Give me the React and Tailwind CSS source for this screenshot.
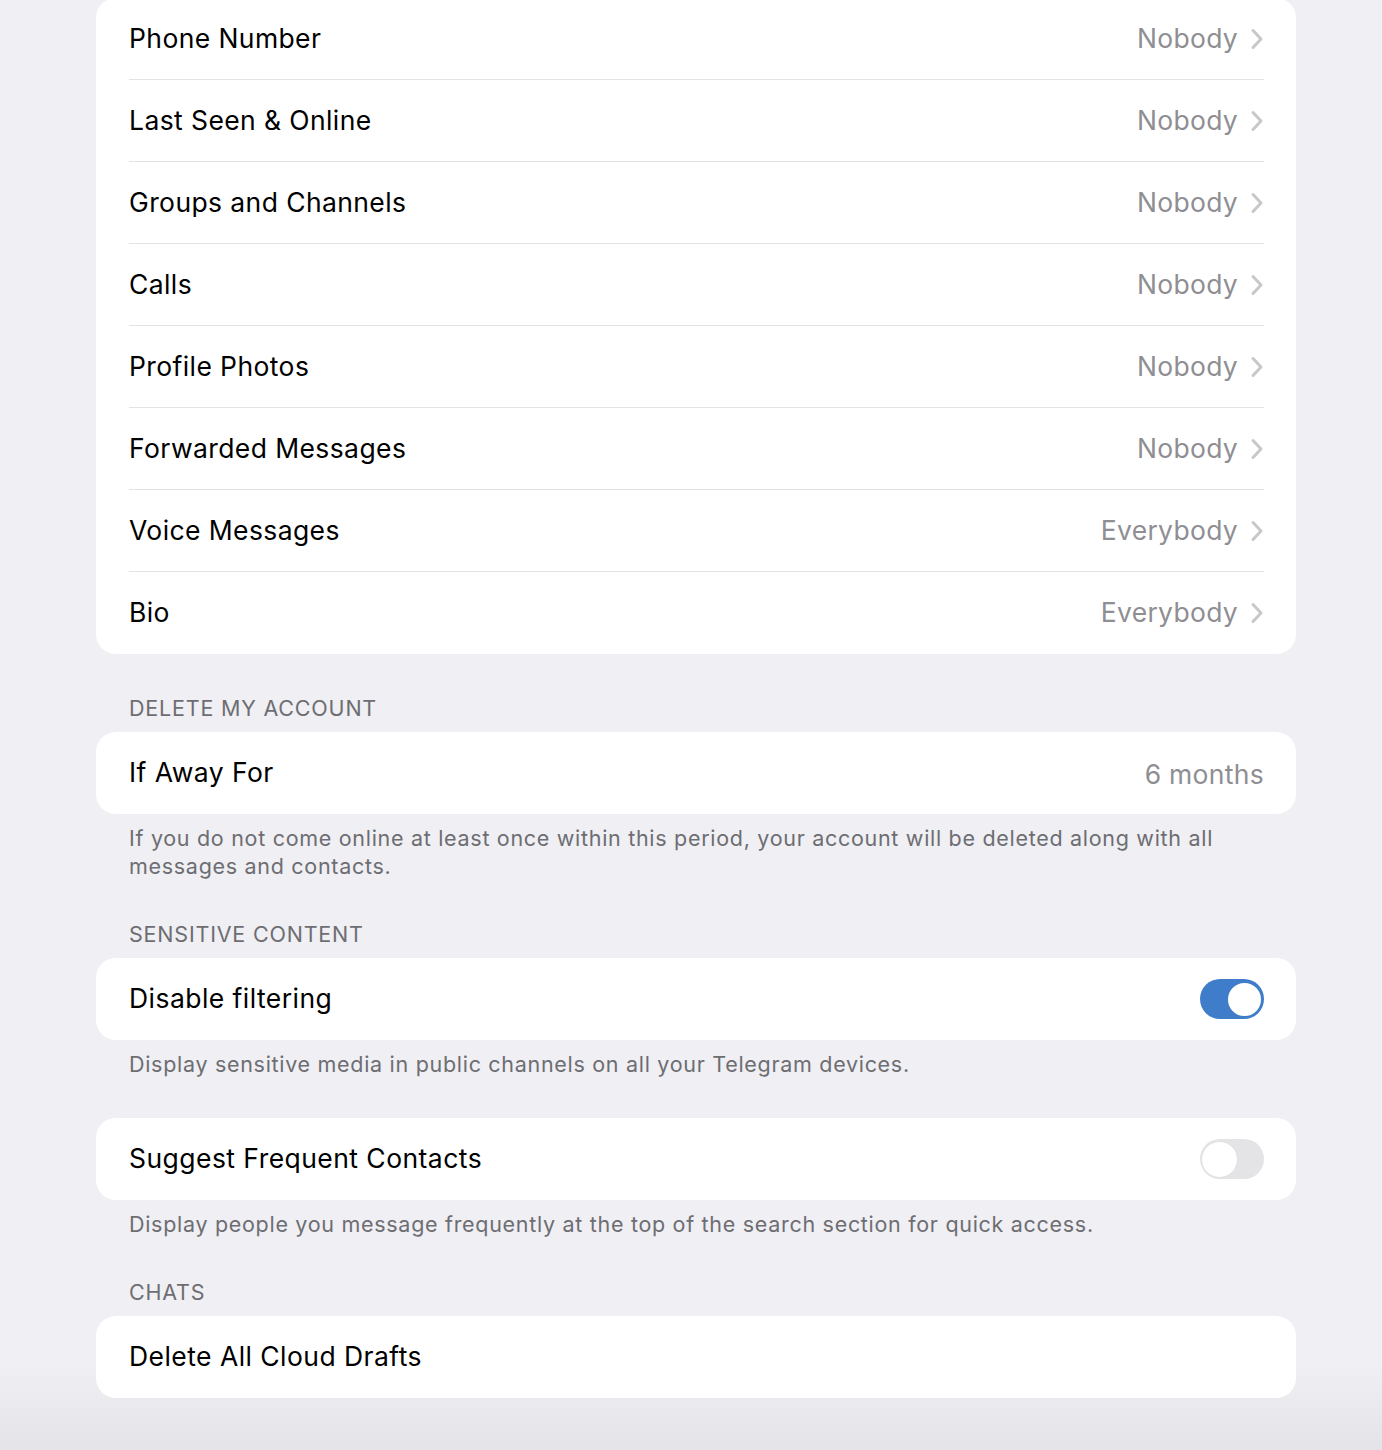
import React from 'react';

const privacyRows = [
  { label: 'Phone Number', value: 'Nobody' },
  { label: 'Last Seen & Online', value: 'Nobody' },
  { label: 'Groups and Channels', value: 'Nobody' },
  { label: 'Calls', value: 'Nobody' },
  { label: 'Profile Photos', value: 'Nobody' },
  { label: 'Forwarded Messages', value: 'Nobody' },
  { label: 'Voice Messages', value: 'Everybody' },
  { label: 'Bio', value: 'Everybody' },
];

const Chevron = () => (
  <svg className="w-[14px] h-[24px] text-[#c7c7cc]" viewBox="0 0 14 24" fill="none" stroke="currentColor">
    <path d="M3 3.5l8 8.5-8 8.5" strokeWidth={3} strokeLinecap="round" strokeLinejoin="round" />
  </svg>
);

const Toggle = ({ on }) =>
  on ? (
    <div className="w-16 h-10 rounded-full bg-[#3f7dcb] flex items-center justify-end pr-[1px]">
      <div className="w-[37px] h-[37px] rounded-full bg-white border-[2px] border-[#3f7dcb]" />
    </div>
  ) : (
    <div className="w-16 h-10 rounded-full bg-[#e4e4e7] flex items-center pl-[1px]">
      <div className="w-[37px] h-[37px] rounded-full bg-white border-[1.5px] border-[#e0e0e3]" />
    </div>
  );

const SectionHeader = ({ children }) => (
  <div className="mt-[42px] mb-3 px-[33px] text-[21.5px] leading-6 text-[#6d6d72] tracking-[0.8px]">
    {children}
  </div>
);

const Footer = ({ children, className = '' }) => (
  <p className={`mt-[10px] px-[33px] text-[21.5px] leading-7 text-[#6d6d72] tracking-[0.7px] ${className}`}>
    {children}
  </p>
);

const Row = ({ children }) => (
  <div className="h-[82px] bg-white rounded-[20px] flex items-center justify-between pl-[33px] pr-[32px] text-[26.5px] text-black tracking-[0.45px]">
    {children}
  </div>
);

export default function App() {
  return (
    <div
      className="min-h-[1450px] w-full bg-[linear-gradient(to_bottom,#efeff4_0%,#efeff4_94%,#e3e3e8_100%)] pb-[52px]"
      style={{ fontFamily: 'Inter, "Noto Sans", sans-serif' }}
    >
      <div className="ml-[96px] w-[1200px]">
        {/* Privacy list */}
        <div className="mt-[-2px] bg-white rounded-[20px] pl-[33px] pr-[32px]">
          {privacyRows.map((row, i) => (
            <div
              key={row.label}
              className={`h-[82px] flex items-center justify-between text-[26.5px] tracking-[0.4px] ${
                i < privacyRows.length - 1 ? 'border-b border-[#e3e3e6]' : ''
              }`}
            >
              <span className="text-black">{row.label}</span>
              <div className="flex items-center gap-[12px]">
                <span className="text-[#8e8e93] tracking-[0.3px]">{row.value}</span>
                <Chevron />
              </div>
            </div>
          ))}
        </div>

        <SectionHeader>DELETE MY ACCOUNT</SectionHeader>
        <Row>
          <span>If Away For</span>
          <span className="text-[#8e8e93] mt-[4px] tracking-[0.3px]">6 months</span>
        </Row>
        <Footer>
          If you do not come online at least once within this period, your account will be deleted along with all
          messages and contacts.
        </Footer>

        <SectionHeader>SENSITIVE CONTENT</SectionHeader>
        <Row>
          <span>Disable filtering</span>
          <Toggle on />
        </Row>
        <Footer>Display sensitive media in public channels on all your Telegram devices.</Footer>

        <div className="mt-10">
          <Row>
            <span>Suggest Frequent Contacts</span>
            <Toggle on={false} />
          </Row>
        </div>
        <Footer>Display people you message frequently at the top of the search section for quick access.</Footer>

        <SectionHeader>CHATS</SectionHeader>
        <Row>
          <span>Delete All Cloud Drafts</span>
        </Row>
      </div>
    </div>
  );
}
